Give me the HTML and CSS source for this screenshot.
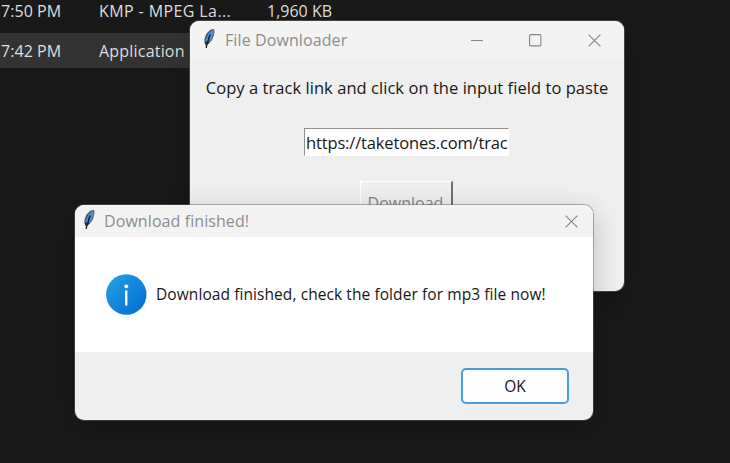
FILE: index.html
```html
<!DOCTYPE html>
<html lang="en">
<head>
<meta charset="utf-8">
<title>File Downloader</title>
<link rel="stylesheet" href="styles.css">
</head>
<body>
<svg class="defs" width="0" height="0" aria-hidden="true">
  <symbol id="feather" viewBox="0 0 14 22">
    <path d="M11.800 1.500C8.500 1.300 5 4.500 3.700 8.500C2.600 11.500 2.500 14 3.600 16L4.500 16.500C8 14.500 10 12 11 8.500C11.800 6 12.200 3.500 11.800 1.500Z" fill="#4c8ed8" stroke="#555b62" stroke-width="1"/>
    <path d="M9.800 2C6.500 4 4.300 7.500 3.500 11.500" fill="none" stroke="#454a50" stroke-width="1"/>
    <path d="M8.300 6.500L6.600 10.500L6.700 12L5 14.500L4.300 20" fill="none" stroke="#14171c" stroke-width="1.300"/>
    <path d="M3.500 13.500L4.300 17L7 14" fill="none" stroke="#202329" stroke-width="1.300"/>
  </symbol>
  <symbol id="close" viewBox="0 0 13 13">
    <path d="M.6 .6L12.400 12.400M12.400 .6L.6 12.400" fill="none" stroke="#858585" stroke-width="1.150"/>
  </symbol>
</svg>
<main class="desktop">
  <div class="file-row"><span class="time">7:50 PM</span><span class="type t-kmp">KMP - MPEG La...</span><span class="size">1,960 KB</span></div>
  <div class="file-row selected"><span class="time">7:42 PM</span><span class="type t-app">Application</span></div>

  <section class="window downloader">
    <header class="titlebar">
      <svg class="feather"><use href="#feather"/></svg>
      <span class="title">File Downloader</span>
      <div class="controls">
        <svg width="13" height="13"><path d="M1 6.500H13" stroke="#858585" stroke-width="1"/></svg>
        <svg width="13" height="13"><rect x=".6" y=".6" width="11.300" height="11.300" rx="1" fill="none" stroke="#858585" stroke-width="1.100"/></svg>
        <svg width="13" height="13"><use href="#close"/></svg>
      </div>
    </header>
    <div class="content">
      <p class="hint">Copy a track link and click on the input field to paste</p>
      <div class="field"><span>https://taketones.com/trac</span></div>
      <div class="download">Download</div>
    </div>
  </section>

  <section class="window dialog">
    <header class="titlebar">
      <svg class="feather"><use href="#feather"/></svg>
      <span class="title">Download finished!</span>
      <svg class="dismiss" width="13" height="13"><use href="#close"/></svg>
    </header>
    <div class="message">
      <svg width="41" height="41" viewBox="0 0 41 41">
        <defs><linearGradient id="blue" x1="0" y1="0" x2="1" y2="1"><stop offset=".1" stop-color="#219de3"/><stop offset=".9" stop-color="#0670d3"/></linearGradient></defs>
        <circle cx="20.300" cy="20.500" r="20.200" fill="url(#blue)"/>
        <circle cx="20.300" cy="12.300" r="1.900" fill="#fff"/>
        <rect x="19.100" y="16.500" width="2.300" height="15" fill="#fff"/>
      </svg>
      <p>Download finished, check the folder for mp3 file now!</p>
    </div>
    <footer class="actions"><div class="ok"><span>OK</span></div></footer>
  </section>
</main>
</body>
</html>
```
FILE: styles.css
```css
* { box-sizing: border-box; }
body { margin: 0; }
p { margin: 0; }
.defs { display: block; position: absolute; }
.desktop {
  position: relative;
  width: 730px;
  height: 463px;
  overflow: hidden;
  background: #191919;
  color: #dedede;
  font: 16px/22px "Open Sans", "Noto Sans", sans-serif;
  white-space: nowrap;
}
.file-row {
  display: grid;
  grid-template-columns: 98px 168px 1fr;
  align-items: center;
  width: 600px;
  height: 35px;
  padding: 1px 0 0 1px;
}
.file-row:first-child { height: 33px; padding-top: 0; padding-bottom: 14px; }
.file-row.selected { background: #333; }
.time { letter-spacing: 0.05px; }
.t-kmp { letter-spacing: 0.4px; }
.t-app { letter-spacing: 0.2px; }
.size { letter-spacing: 0; }
.window {
  position: absolute;
  display: flex;
  flex-direction: column;
  overflow: hidden;
  border-radius: 9px;
  background: #efefef;
  color: #171717;
}
.downloader {
  left: 190px;
  top: 21px;
  width: 434px;
  height: 270px;
  box-shadow: 0 0 0 1px #444, 0 8px 22px rgba(0, 0, 0, .2);
}
.dialog {
  left: 75px;
  top: 205px;
  width: 518px;
  height: 215px;
  box-shadow: 0 0 0 1px rgba(100, 100, 100, .5), 0 8px 28px rgba(0, 0, 0, .22);
}
.titlebar {
  display: flex;
  align-items: center;
  flex: none;
  height: 38px;
  background: #f3f3f3;
  color: #8c8c8c;
}
.feather { width: 14px; height: 22px; margin: 0 9px 2px 12px; }
.downloader .title { letter-spacing: 0.1px; }
.dialog .title { letter-spacing: 0.08px; }
.controls { display: flex; gap: 46px; margin: 0 23px 0 auto; }
.content { display: flex; flex-direction: column; align-items: center; }
.hint { margin-top: 18px; font-size: 16.5px; letter-spacing: 0.05px; }
.field {
  width: 205px;
  height: 28px;
  margin: 29px 1px 1px 0;
  padding: 3px 0 0 1px;
  border: 1px solid #fff;
  border-top-color: #8e8e8e;
  border-left-color: #8e8e8e;
  background: #fff;
}
.field span { display: block; overflow: hidden; font-size: 16.5px; letter-spacing: -0.15px; }
.download {
  width: 93px;
  height: 46px;
  margin: 24px 2px 0 0;
  padding-top: 10px;
  border: 1px solid #fff;
  border-right: 2px solid #707070;
  border-bottom: 2px solid #707070;
  color: #858585;
  text-align: center;
}
.dialog .titlebar { height: 32px; }
.dialog .feather { margin: 0 8px 2px 7px; }
.dismiss { margin: 0 15px 0 auto; }
.message {
  display: flex;
  align-items: center;
  height: 115px;
  padding-left: 31px;
  gap: 9px;
  background: #fff;
}
.message p { margin-top: -1px; font-size: 15.5px; letter-spacing: 0.08px; }
.actions { display: flex; justify-content: flex-end; padding: 16px 24px; }
.ok {
  display: flex;
  align-items: center;
  justify-content: center;
  width: 108px;
  height: 36px;
  border: 2px solid #4b9cdb;
  border-radius: 5px;
  background: #fdfdfd;
  font-size: 15.5px;
}
```
